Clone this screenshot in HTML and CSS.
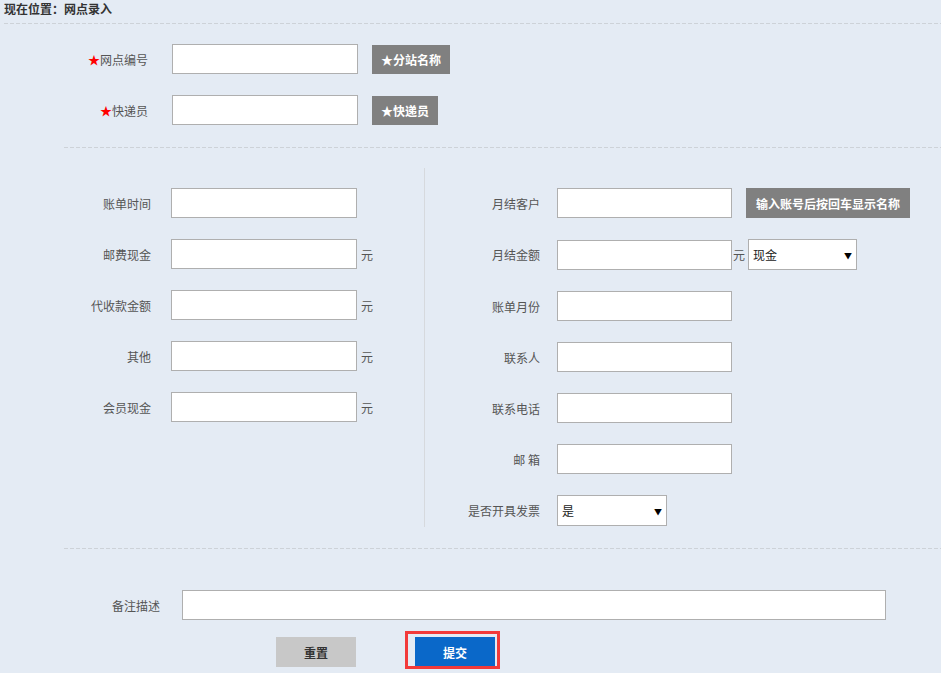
FILE: index.html
```html
<!DOCTYPE html>
<html lang="zh-CN">
<head>
<meta charset="utf-8">
<title>网点录入</title>
<link rel="stylesheet" href="styles.css">
</head>
<body>
<div class="crumb">现在位置：网点录入</div>
<div class="dash"></div>

<section class="top">
  <div class="row">
    <label class="lbl-top"><span class="star">★</span>网点编号</label>
    <input class="ipt ipt-top" type="text">
    <button class="gbtn" type="button">★分站名称</button>
  </div>
  <div class="row">
    <label class="lbl-top"><span class="star">★</span>快递员</label>
    <input class="ipt ipt-top" type="text">
    <button class="gbtn" type="button">★快递员</button>
  </div>
</section>

<div class="dash indent"></div>

<section class="mid">
  <div class="col col-left">
    <div class="row"><label class="lbl-l">账单时间</label><input class="ipt ipt-l" type="text"></div>
    <div class="row"><label class="lbl-l">邮费现金</label><input class="ipt ipt-l" type="text"><span class="unit">元</span></div>
    <div class="row"><label class="lbl-l">代收款金额</label><input class="ipt ipt-l" type="text"><span class="unit">元</span></div>
    <div class="row"><label class="lbl-l">其他</label><input class="ipt ipt-l" type="text"><span class="unit">元</span></div>
    <div class="row"><label class="lbl-l">会员现金</label><input class="ipt ipt-l" type="text"><span class="unit">元</span></div>
  </div>
  <div class="col col-right">
    <div class="row"><label class="lbl-r">月结客户</label><input class="ipt ipt-r" type="text"><button class="gbtn gbtn-r" type="button">输入账号后按回车显示名称</button></div>
    <div class="row"><label class="lbl-r">月结金额</label><input class="ipt ipt-r" type="text"><span class="unit unit-tight">元</span>
      <span class="sel sel-pay"><select><option>现金</option></select><span class="arrow">▼</span></span>
    </div>
    <div class="row"><label class="lbl-r">账单月份</label><input class="ipt ipt-r" type="text"></div>
    <div class="row"><label class="lbl-r">联系人</label><input class="ipt ipt-r" type="text"></div>
    <div class="row"><label class="lbl-r">联系电话</label><input class="ipt ipt-r" type="text"></div>
    <div class="row"><label class="lbl-r">邮 箱</label><input class="ipt ipt-r" type="text"></div>
    <div class="row"><label class="lbl-r">是否开具发票</label>
      <span class="sel sel-inv"><select><option>是</option></select><span class="arrow">▼</span></span>
    </div>
  </div>
</section>

<div class="dash indent"></div>

<section class="bottom">
  <div class="row"><label class="lbl-b">备注描述</label><input class="ipt ipt-b" type="text"></div>
  <div class="actions">
    <button class="btn btn-reset" type="button">重置</button>
    <span class="submit-wrap"><button class="btn btn-submit" type="button">提交</button></span>
  </div>
</section>
</body>
</html>
```

FILE: styles.css
```css
*, *::before, *::after { box-sizing: border-box; }

html, body {
  margin: 0;
  padding: 0;
}

body {
  width: 941px;
  height: 673px;
  overflow: hidden;
  background: #e4ebf4;
  font-family: "Noto Sans CJK SC", "Microsoft YaHei", sans-serif;
  font-size: 12px;
  color: #555;
}

.crumb {
  height: 23px;
  line-height: 17px;
  padding-left: 4px;
  font-weight: bold;
  color: #333;
}

.dash {
  height: 1px;
  margin-left: 4px;
  background: repeating-linear-gradient(to right, #cdd2d8 0 4px, transparent 4px 6px);
}

.dash.indent {
  margin-left: 64px;
}

.row {
  display: flex;
  align-items: center;
  min-height: 30px;
}

.ipt {
  height: 30px;
  border: 1px solid #afafaf;
  background: #fff;
  padding: 0 4px;
  font-family: inherit;
  font-size: 12px;
  outline: none;
}

.star { color: #f00; }

/* top block */
.top {
  display: flex;
  flex-direction: column;
  gap: 21px;
  padding: 20px 0 22px;
}

.lbl-top {
  width: 148px;
  text-align: right;
}

.ipt-top {
  width: 186px;
  margin-left: 24px;
}

.gbtn {
  height: 29px;
  margin-left: 14px;
  padding: 0 9px;
  border: 0;
  background: #808080;
  color: #fff;
  font-family: inherit;
  font-size: 12px;
  font-weight: 600;
}

.gbtn-r {
  height: 30px;
  padding: 0 10px;
}

/* middle block */
.mid {
  display: flex;
  align-items: flex-start;
  padding: 20px 0 21px 64px;
}

.col {
  display: flex;
  flex-direction: column;
  gap: 21px;
  padding-top: 20px;
}

.col-left { width: 360px; }

.col-right {
  border-left: 1px solid #d6d9dd;
  padding-bottom: 1px;
}

.lbl-l {
  width: 87px;
  text-align: right;
}

.ipt-l {
  width: 186px;
  margin-left: 20px;
}

.unit {
  margin-left: 4px;
  color: #555;
}

.unit-tight { margin-left: 1px; }

.lbl-r {
  width: 115px;
  text-align: right;
}

.ipt-r {
  width: 175px;
  margin-left: 17px;
}

.sel {
  position: relative;
  display: inline-block;
  height: 31px;
}

.sel select {
  width: 100%;
  height: 100%;
  border: 1px solid #afafaf;
  background: #fff;
  padding: 0 4px;
  font-family: inherit;
  font-size: 12px;
  color: #222;
  appearance: none;
  -webkit-appearance: none;
  border-radius: 0;
  outline: none;
}

.sel .arrow {
  position: absolute;
  right: 5px;
  top: 50%;
  transform: translateY(-50%);
  font-size: 8px;
  color: #000;
  pointer-events: none;
}

.sel-pay {
  width: 109px;
  margin-left: 3px;
}

.sel-inv {
  width: 110px;
  margin-left: 17px;
}

/* bottom block */
.bottom {
  padding: 41px 0 0 64px;
}

.lbl-b {
  width: 96px;
  text-align: right;
}

.ipt-b {
  width: 704px;
  margin-left: 22px;
}

.actions {
  display: flex;
  margin-top: 17px;
  padding-left: 212px;
}

.btn {
  width: 80px;
  height: 30px;
  border: 0;
  font-family: inherit;
  font-size: 12px;
  font-weight: 600;
}

.btn-reset {
  background: #c8c8c8;
  color: #333;
}

.submit-wrap {
  position: relative;
  margin-left: 59px;
  display: inline-block;
  height: 30px;
}

.submit-wrap::after {
  content: "";
  position: absolute;
  left: -10px;
  top: -6px;
  width: 95px;
  height: 38px;
  border: 3px solid #f23a3a;
  pointer-events: none;
}

.btn-submit {
  background: #0a68c9;
  color: #fff;
}
```
